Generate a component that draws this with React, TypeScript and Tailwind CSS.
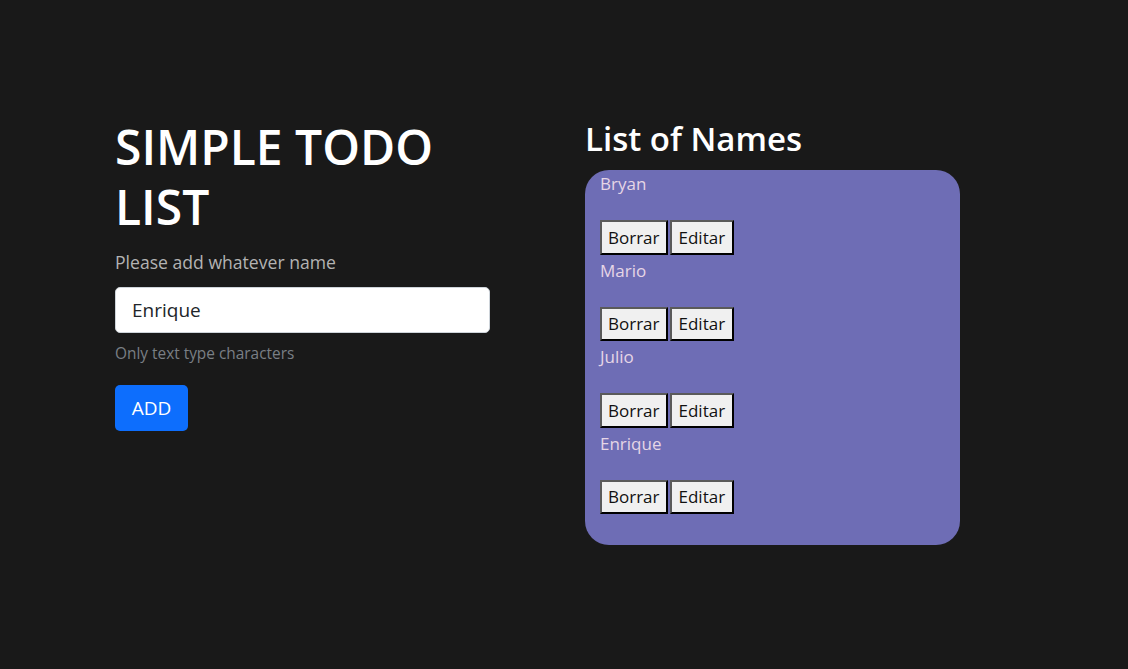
import React from "react";

const names = ["Bryan", "Mario", "Julio", "Enrique"];

const App = () => {
  return (
    <div
      className="min-h-[669px] w-full bg-[#191919] pt-[117px] pl-[115px]"
      style={{ fontFamily: '"Open Sans", "Noto Sans", sans-serif' }}
    >
      <div className="flex items-start gap-[95px]">
        {/* form column */}
        <div className="flex w-[375px] flex-col">
          <h1 className="text-[48px] font-semibold leading-[60px] text-white">
            SIMPLE TODO LIST
          </h1>
          <p className="mt-[13px] text-[17.6px] leading-[24px] text-[#b3b3b3]">
            Please add whatever name
          </p>
          <input
            type="text"
            defaultValue="Enrique"
            className="mt-[13px] h-[46px] w-full rounded-[5px] border border-[#ced4da] bg-white px-[16px] text-[19px] text-[#212529] outline-none"
          />
          <p className="mt-[10px] text-[15.4px] leading-[21px] text-[#7a7f85]">
            Only text type characters
          </p>
          <button className="mt-[21px] h-[46px] w-[73px] rounded-[5px] bg-[#0d6efd] text-[19px] text-white">
            ADD
          </button>
        </div>

        {/* list column */}
        <div className="flex flex-col">
          <h2 className="text-[33px] font-semibold leading-[43px] text-white">
            List of Names
          </h2>
          <div className="mt-[10px] h-[375px] w-[375px] rounded-[24px] bg-[#6e6db5] px-[15px] pt-[2px]">
            {names.map((name) => (
              <div key={name} className="flex flex-col">
                <p className="mb-[24px] text-[17px] leading-[24px] text-[#e6d6e6]">{name}</p>
                <div className="mb-[4px] flex gap-[2px]">
                  <button className="h-[34.5px] border-2 border-t-[#5a5a5a] border-l-[#5a5a5a] border-r-black border-b-black bg-[#f0f0f0] px-[6px] text-[17px] text-[#111]">
                    Borrar
                  </button>
                  <button className="h-[34.5px] border-2 border-t-[#5a5a5a] border-l-[#5a5a5a] border-r-black border-b-black bg-[#f0f0f0] px-[7px] text-[17px] text-[#111]">
                    Editar
                  </button>
                </div>
              </div>
            ))}
          </div>
        </div>
      </div>
    </div>
  );
};

export default App;
